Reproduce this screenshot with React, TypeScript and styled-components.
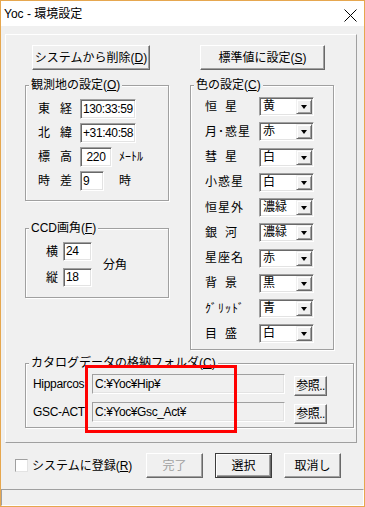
import React from 'react';
import styled, { createGlobalStyle, css } from 'styled-components';

const GlobalStyle = createGlobalStyle`
  html, body {
    margin: 0;
    padding: 0;
    background: #f0f0f0;
  }
  body {
    font-family: "Liberation Sans", "Noto Sans CJK JP", sans-serif;
    font-size: 12px;
    color: #000;
  }
  * {
    box-sizing: border-box;
  }
`;

const Window = styled.div`
  position: relative;
  width: 365px;
  height: 507px;
  border: 1px solid #e6a74f;
  background: #f0f0f0;
  display: flex;
  flex-direction: column;
`;

const TitleBar = styled.div`
  height: 25px;
  flex: none;
  background: #fff;
  display: flex;
  align-items: center;
  justify-content: space-between;
  padding: 0 7px 0 3px;
  line-height: 14px;
`;

const CloseIcon = styled.svg`
  margin-top: 4px;
`;

const Panel = styled.div`
  margin: 8px 7px 0 4px;
  height: 409px;
  flex: none;
  border: 1px solid;
  border-color: #fff #a0a0a0 #a0a0a0 #fff;
  padding: 10px 0 0 19px;
  display: flex;
  flex-direction: column;
`;

const TopButtons = styled.div`
  display: flex;
  gap: 50px;
  margin-left: 7px;
`;

const Btn = styled.button<{ $w: number; $h?: number; $primary?: boolean }>`
  width: ${p => p.$w}px;
  height: ${p => p.$h ?? 25}px;
  flex: none;
  margin: 0;
  padding: 0;
  font-family: inherit;
  font-size: 12px;
  line-height: 14px;
  color: #000;
  background: #f0f0f0;
  border: 1px solid;
  border-color: #fff #696969 #696969 #fff;
  box-shadow: inset -1px -1px 0 #a0a0a0;
  white-space: nowrap;
  &:disabled {
    color: #a0a0a0;
  }
  ${p =>
    p.$primary &&
    css`
      border-color: #3c3c3c;
      box-shadow: inset 1px 1px 0 #fff, inset -1px -1px 0 #696969, inset -2px -2px 0 #a0a0a0;
    `}
`;

const Columns = styled.div`
  display: grid;
  grid-template-columns: 144px 144px;
  column-gap: 21px;
  align-items: start;
  margin-top: 8px;
`;

const LeftCol = styled.div`
  display: flex;
  flex-direction: column;
  gap: 20px;
`;

const Group = styled.fieldset<{ $w: number }>`
  margin: 0;
  padding: 0;
  min-width: 0;
  width: ${p => p.$w}px;
  border: 1px solid #a0a0a0;
  box-shadow: 1px 1px 0 #fff, inset 1px 1px 0 #fff;
`;

const Legend = styled.legend`
  margin-left: 3px;
  padding: 0 2px;
  line-height: 14px;
  background: #f0f0f0;
  white-space: nowrap;
`;

const SiteGrid = styled.div`
  display: grid;
  grid-template-columns: 42px 39px auto;
  grid-auto-rows: 20px;
  row-gap: 4px;
  align-items: center;
  padding: 7px 0 9px 12px;
`;

const CcdGrid = styled.div`
  display: grid;
  grid-template-columns: 17px 29px auto;
  grid-auto-rows: 19px;
  row-gap: 7px;
  align-items: center;
  padding: 7px 0 10px 20px;
`;

const ColorGrid = styled.div`
  display: grid;
  grid-template-columns: 54px 55px;
  grid-auto-rows: 19px;
  row-gap: 6.25px;
  align-items: center;
  padding: 5px 0 6px 14px;
`;

const CatalogGrid = styled.div`
  display: grid;
  grid-template-columns: 59px 202px auto;
  grid-auto-rows: 20px;
  row-gap: 8px;
  align-items: start;
  padding: 4px 0 5px 7px;
`;

const Label = styled.span<{ $ls?: number }>`
  line-height: 14px;
  letter-spacing: ${p => p.$ls ?? 0}px;
  white-space: nowrap;
`;

const PathLabel = styled.span`
  line-height: 20px;
  letter-spacing: -0.3px;
  white-space: nowrap;
`;

const Unit = styled.span<{ $rows?: number; $indent?: number }>`
  line-height: 14px;
  white-space: nowrap;
  margin-left: ${p => p.$indent ?? 0}px;
  ${p =>
    p.$rows &&
    css`
      grid-row: span ${p.$rows};
    `}
`;

const Field = styled.div<{ $w: number; $h?: number; $center?: boolean; $readonly?: boolean; $span?: number }>`
  width: ${p => p.$w}px;
  height: ${p => p.$h ?? 20}px;
  background: ${p => (p.$readonly ? '#f0f0f0' : '#fff')};
  border: 1px solid;
  border-color: #a0a0a0 #fff #fff #a0a0a0;
  box-shadow: ${p =>
    p.$readonly ? 'inset -1px -1px 0 #e3e3e3' : 'inset 1px 1px 0 #696969, inset -1px -1px 0 #e3e3e3'};
  padding: 0 2px;
  line-height: ${p => (p.$h ?? 20) - 2}px;
  letter-spacing: -0.4px;
  text-align: ${p => (p.$center ? 'center' : 'left')};
  white-space: nowrap;
  overflow: hidden;
  ${p =>
    p.$span &&
    css`
      grid-column: span ${p.$span};
    `}
`;

const Select = styled.div`
  width: 55px;
  height: 19px;
  display: flex;
  align-items: stretch;
  background: #fff;
  border: 1px solid;
  border-color: #a0a0a0 #fff #fff #a0a0a0;
  box-shadow: inset 1px 1px 0 #696969, inset -1px -1px 0 #e3e3e3;
  padding: 1px;
`;

const SelectText = styled.span`
  flex: 1;
  padding-left: 2px;
  line-height: 15px;
`;

const SelectArrow = styled.span`
  width: 16px;
  flex: none;
  background: #f0f0f0;
  border: 1px solid;
  border-color: #f0f0f0 #696969 #696969 #f0f0f0;
  box-shadow: inset 1px 1px 0 #fff, inset -1px -1px 0 #a0a0a0;
  display: flex;
  align-items: center;
  justify-content: center;
  &::after {
    content: '';
    border-left: 3.5px solid transparent;
    border-right: 3.5px solid transparent;
    border-top: 4px solid #000;
    margin-top: 1px;
  }
`;

const BrowseBtn = styled(Btn)`
  margin: 2px 0 0 0;
  letter-spacing: -0.5px;
`;

const BottomRow = styled.div`
  display: flex;
  align-items: center;
  margin-top: 10px;
  padding-left: 14px;
`;

const CheckArea = styled.label`
  width: 131px;
  flex: none;
  display: flex;
  align-items: center;
  gap: 4px;
  line-height: 14px;
  white-space: nowrap;
`;

const CheckBox = styled.span`
  width: 13px;
  height: 13px;
  flex: none;
  background: #fff;
  border: 1px solid;
  border-color: #a0a0a0 #e3e3e3 #e3e3e3 #a0a0a0;
`;

const DialogButtons = styled.div`
  display: flex;
  gap: 12px;
`;

const StatusBar = styled.div`
  margin-top: auto;
  height: 17px;
  flex: none;
  border: 1px solid;
  border-color: #a0a0a0 #fff #fff #a0a0a0;
`;

const Highlight = styled.div`
  position: absolute;
  left: 84px;
  top: 364px;
  width: 152px;
  height: 68px;
  border: 3px solid #ff0000;
  pointer-events: none;
`;

const colors: [string, string][] = [
  ['恒\u2002星', '黄'],
  ['月･惑星', '赤'],
  ['彗\u2002星', '白'],
  ['小惑星', '白'],
  ['恒星外', '濃緑'],
  ['銀\u2002河', '濃緑'],
  ['星座名', '赤'],
  ['背\u2002景', '黒'],
  ['ｸﾞﾘｯﾄﾞ', '青'],
  ['目\u2002盛', '白'],
];

export default function App() {
  return (
    <>
      <GlobalStyle />
      <Window>
        <TitleBar>
          <span>Yoc - 環境設定</span>
          <CloseIcon width="13" height="13" viewBox="0 0 13 13">
            <path d="M0.5 0.5 L12.5 12.5 M12.5 0.5 L0.5 12.5" stroke="#000" strokeWidth="1" fill="none" />
          </CloseIcon>
        </TitleBar>

        <Panel>
          <TopButtons>
            <Btn $w={118}>
              システムから削除(<u>D</u>)
            </Btn>
            <Btn $w={125}>
              標準値に設定(<u>S</u>)
            </Btn>
          </TopButtons>

          <Columns>
            <LeftCol>
              <Group $w={144}>
                <Legend>
                  観測地の設定(<u>O</u>)
                </Legend>
                <SiteGrid>
                  <Label $ls={2}>東{'\u2002'}経</Label>
                  <Field $w={56} $span={2}>130:33:59</Field>
                  <Label $ls={2}>北{'\u2002'}緯</Label>
                  <Field $w={56} $span={2}>+31:40:58</Field>
                  <Label $ls={2}>標{'\u2002'}高</Label>
                  <Field $w={32} $center>220</Field>
                  <Unit>ﾒｰﾄﾙ</Unit>
                  <Label $ls={2}>時{'\u2002'}差</Label>
                  <Field $w={24}>9</Field>
                  <Unit>時</Unit>
                </SiteGrid>
              </Group>

              <Group $w={144}>
                <Legend>
                  CCD画角(<u>F</u>)
                </Legend>
                <CcdGrid>
                  <Label>横</Label>
                  <Field $w={29} $h={19}>24</Field>
                  <Unit $rows={2} $indent={11}>分角</Unit>
                  <Label>縦</Label>
                  <Field $w={29} $h={19}>18</Field>
                </CcdGrid>
              </Group>
            </LeftCol>

            <Group $w={144}>
              <Legend>
                色の設定(<u>C</u>)
              </Legend>
              <ColorGrid>
                {colors.map(([name, value]) => (
                  <React.Fragment key={name}>
                    <Label $ls={1}>{name}</Label>
                    <Select>
                      <SelectText>{value}</SelectText>
                      <SelectArrow />
                    </Select>
                  </React.Fragment>
                ))}
              </ColorGrid>
            </Group>
          </Columns>

          <Group $w={329} style={{ marginTop: 6 }}>
            <Legend>
              カタログデータの格納フォルダ(<u>C</u>)
            </Legend>
            <CatalogGrid>
              <PathLabel>Hipparcos</PathLabel>
              <Field $w={193} $readonly>C:¥Yoc¥Hip¥</Field>
              <BrowseBtn $w={33} $h={20}>参照..</BrowseBtn>
              <PathLabel>GSC-ACT</PathLabel>
              <Field $w={193} $readonly>C:¥Yoc¥Gsc_Act¥</Field>
              <BrowseBtn $w={33} $h={20}>参照..</BrowseBtn>
            </CatalogGrid>
          </Group>
        </Panel>

        <BottomRow>
          <CheckArea>
            <CheckBox />
            <span>
              システムに登録(<u>R</u>)
            </span>
          </CheckArea>
          <DialogButtons>
            <Btn $w={57} disabled>
              完了
            </Btn>
            <Btn $w={57} $primary>
              選択
            </Btn>
            <Btn $w={57}>取消し</Btn>
          </DialogButtons>
        </BottomRow>

        <StatusBar />

        <Highlight />
      </Window>
    </>
  );
}
